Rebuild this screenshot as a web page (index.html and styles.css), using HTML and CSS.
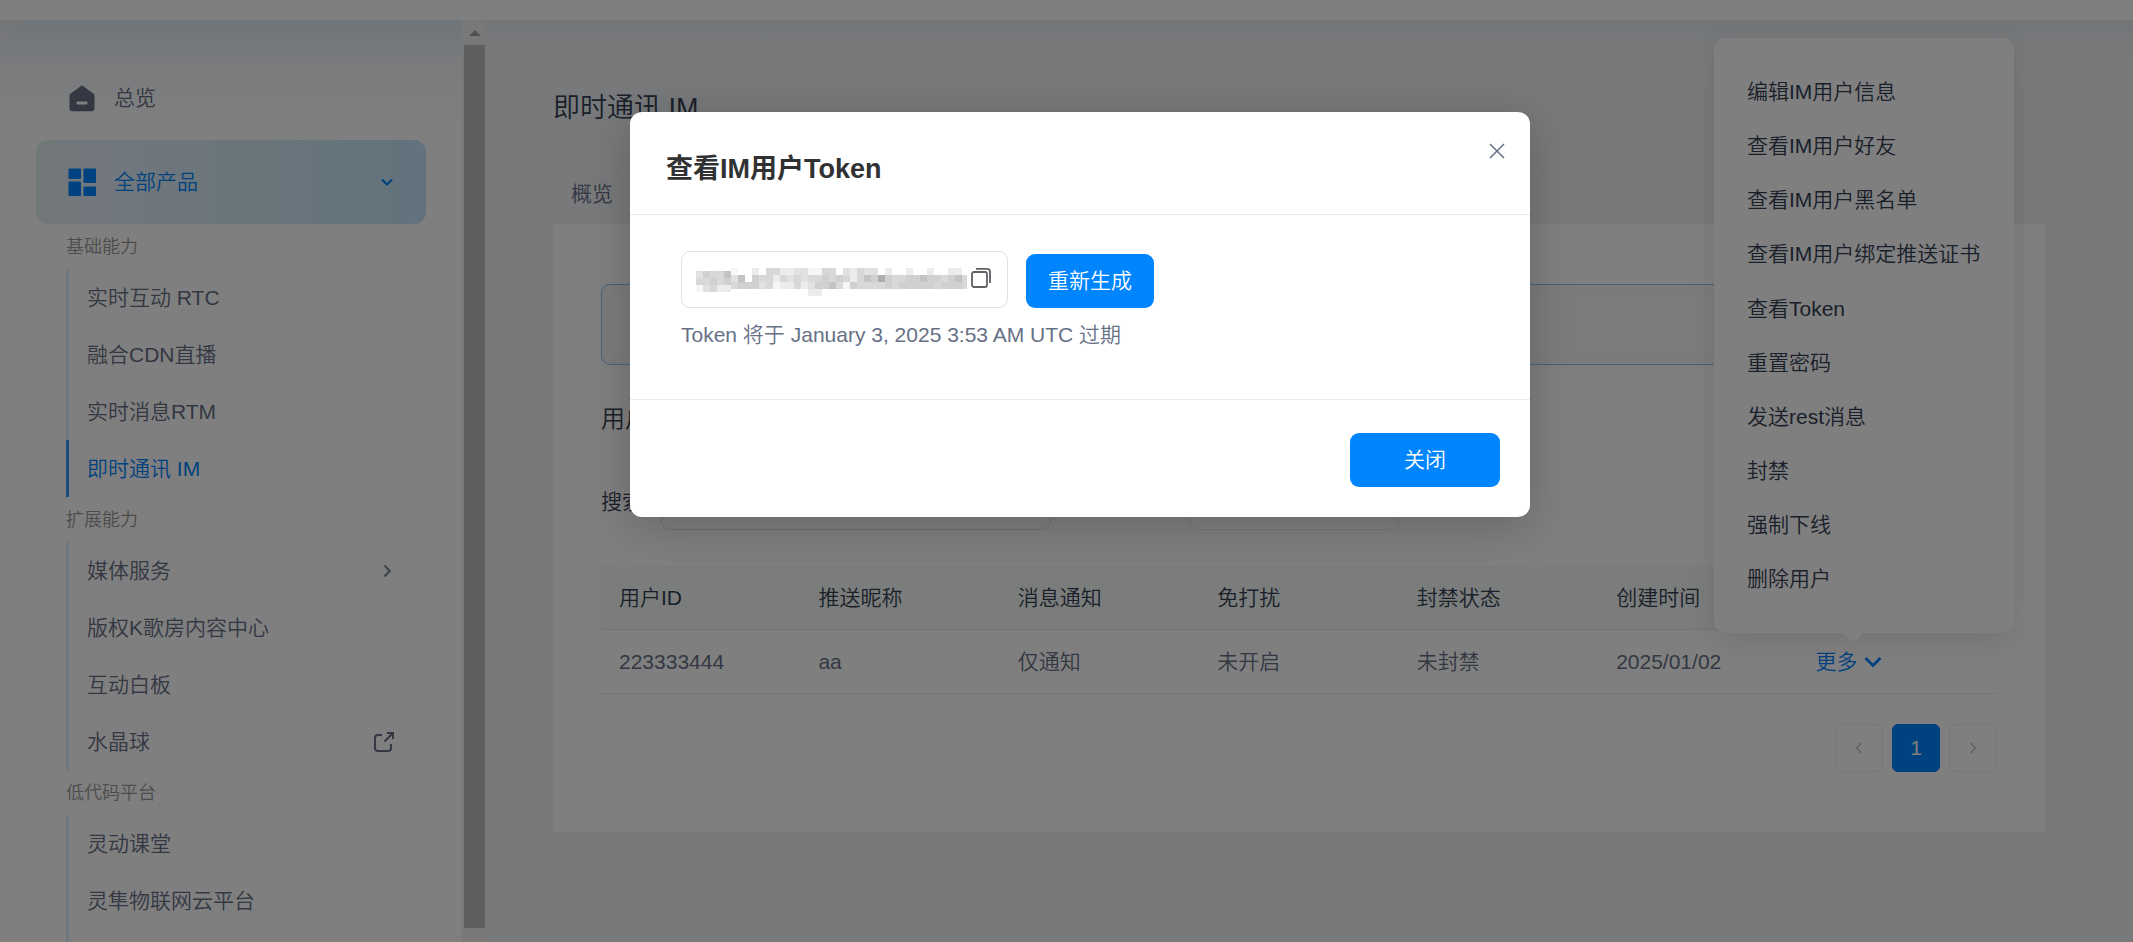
FILE: index.html
```html
<!DOCTYPE html>
<html lang="zh-CN">
<head>
<meta charset="utf-8">
<title>即时通讯 IM</title>
<link rel="stylesheet" href="styles.css">
</head>
<body>
<div class="app">
  <header class="topbar"></header>
  <div class="workspace">
    <aside class="sidebar">
      <nav class="nav">
        <a class="nav-main">
          <svg class="nav-icon" viewBox="0 0 28 28"><path d="M14 1.2 25.3 9.6Q26.500 10.500 26.500 12V24.300Q26.500 27.300 23.500 27.300H4.500Q1.500 27.300 1.500 24.300V12Q1.500 10.500 2.700 9.600Z" fill="#667085"/><rect x="8.500" y="17.500" width="11" height="3" rx="1.200" fill="#fff"/></svg>
          <span>总览</span>
        </a>
        <a class="nav-main nav-main-active">
          <svg class="nav-icon" viewBox="0 0 28 28"><g fill="#0085ff"><rect x=".5" y=".5" width="12.500" height="10.500" rx="1"/><rect x="15.500" y=".5" width="12.500" height="14.500" rx="1"/><rect x=".5" y="13.500" width="12.500" height="14.500" rx="1"/><rect x="15.500" y="18.500" width="12.500" height="9.500" rx="1"/></g></svg>
          <span>全部产品</span>
          <svg class="nav-arrow" viewBox="0 0 14 14"><path d="M2 4.500 7 9.500 12 4.500" fill="none" stroke="#0085ff" stroke-width="2.200"/></svg>
        </a>
        <h3 class="nav-title">基础能力</h3>
        <ul class="nav-list">
          <li>实时互动 RTC</li>
          <li>融合CDN直播</li>
          <li>实时消息RTM</li>
          <li class="current">即时通讯 IM</li>
        </ul>
        <h3 class="nav-title">扩展能力</h3>
        <ul class="nav-list">
          <li>媒体服务<svg class="nav-arrow sub" viewBox="0 0 14 14"><path d="M4.500 1.500 9.700 7 4.500 12.500" fill="none" stroke="#7e8798" stroke-width="2.200"/></svg></li>
          <li>版权K歌房内容中心</li>
          <li>互动白板</li>
          <li>水晶球<svg class="nav-ext" viewBox="0 0 22 22"><g fill="none" stroke="#667085" stroke-width="2"><path d="M9 4H5Q2 4 2 7V17Q2 20 5 20H15Q18 20 18 17V13"/><path d="M14 2H20V8M20 2 11.500 10.500"/></g></svg></li>
        </ul>
        <h3 class="nav-title">低代码平台</h3>
        <ul class="nav-list">
          <li>灵动课堂</li>
          <li>灵隼物联网云平台</li>
          <li></li>
        </ul>
      </nav>
      <div class="scrollbar">
        <svg class="scroll-up" viewBox="0 0 12 6"><path d="M0 6 6 0 12 6Z" fill="#a0a0a0"/></svg>
        <div class="scroll-thumb"></div>
      </div>
    </aside>
    <main class="main">
      <h1 class="page-title">即时通讯 IM</h1>
      <div class="tabs"><span>概览</span></div>
      <section class="card">
        <div class="notice"><div class="notice-body"></div></div>
        <h2 class="card-title">用户管理</h2>
        <div class="filters">
          <span class="filter-label">搜索</span>
          <div class="field search"></div>
          <div class="field select"></div>
        </div>
        <div class="table">
          <div class="row head"><span>用户ID</span><span>推送昵称</span><span>消息通知</span><span>免打扰</span><span>封禁状态</span><span>创建时间</span><span></span></div>
          <div class="row"><span>223333444</span><span>aa</span><span>仅通知</span><span>未开启</span><span>未封禁</span><span>2025/01/02</span><span class="more">更多<svg viewBox="0 0 18 12"><path d="M1.500 2 9 9.500 16.500 2" fill="none" stroke="#0085ff" stroke-width="2.800"/></svg></span></div>
        </div>
        <div class="pager">
          <span class="page"><svg viewBox="0 0 12 12"><path d="M8.500 1 3.500 6 8.500 11" fill="none" stroke="#c4c6ca" stroke-width="1.600"/></svg></span>
          <span class="page page-on">1</span>
          <span class="page"><svg viewBox="0 0 12 12"><path d="M3.500 1 8.500 6 3.500 11" fill="none" stroke="#c4c6ca" stroke-width="1.600"/></svg></span>
        </div>
      </section>
    </main>
  </div>
</div>

<div class="popover">
  <ul class="menu">
    <li>编辑IM用户信息</li>
    <li>查看IM用户好友</li>
    <li>查看IM用户黑名单</li>
    <li>查看IM用户绑定推送证书</li>
    <li>查看Token</li>
    <li>重置密码</li>
    <li>发送rest消息</li>
    <li>封禁</li>
    <li>强制下线</li>
    <li>删除用户</li>
  </ul>
  <svg class="popover-tip" viewBox="0 0 22 11"><path d="M0 0H22L13 9Q11 11 9 9Z" fill="#fff"/></svg>
</div>

<div class="overlay">
  <div class="modal">
    <div class="modal-head">
      <h2>查看IM用户Token</h2>
      <svg class="close" viewBox="0 0 16 16"><path d="M1 1 15 15M15 1 1 15" stroke="#667085" stroke-width="1.500"/></svg>
    </div>
    <div class="modal-body">
      <div class="token-row">
        <div class="token-box">
          <svg class="token-mask" id="mask" viewBox="0 0 272 28" shape-rendering="crispEdges"></svg>
          <svg class="copy" viewBox="0 0 20 20"><g fill="none" stroke="#606166" stroke-width="1.800"><rect x="1" y="4" width="15" height="15" rx="2"/><path d="M5 .9H16Q19 .9 19 4V15"/></g></svg>
        </div>
        <button class="btn btn-regen">重新生成</button>
      </div>
      <p class="token-tip">Token 将于 January 3, 2025 3:53 AM UTC 过期</p>
    </div>
    <div class="modal-foot"><button class="btn btn-close">关闭</button></div>
  </div>
</div>
<script src="mask.js"></script>
</body>
</html>
```

FILE: styles.css
```css
* { box-sizing: border-box; }
body {
  margin: 0;
  height: 942px;
  overflow: hidden;
  position: relative;
  font: 350 21px/30px "Liberation Sans", "Noto Sans CJK SC", sans-serif;
  color: #667085;
  background: #fff;
}
h1, h2, h3, p, ul { margin: 0; padding: 0; font-weight: 350; list-style: none; }
svg { display: block; flex: none; }

.app { height: 942px; display: flex; flex-direction: column; }
.topbar { height: 20px; background: #fff; }
.workspace {
  height: 922px;
  display: flex;
  background: linear-gradient(#e3eaf0, #eef1f5 20px, #f1f3f7 60px);
}

.sidebar {
  width: 486px;
  display: flex;
  overflow: hidden;
}
.nav {
  width: 462px;
  padding: 36px 36px 0;
  border-top-left-radius: 36px 54px;
  background: linear-gradient(#dce9f1, #f3f6fa 40px, #fff 110px);
}
.nav-main {
  height: 84px;
  padding: 0 32px;
  display: flex;
  align-items: center;
  border-radius: 12px;
}
.nav-main-active {
  color: #0085ff;
  background: linear-gradient(90deg, #e3eef0, #e4effb 15%, #d5ebf6 50%, #c4e6fa);
}
.nav-icon { width: 28px; height: 28px; margin-right: 18px; }
.nav-arrow { width: 14px; height: 14px; margin-left: auto; }
.nav-arrow.sub { margin-right: 32px; }
.nav-ext { width: 22px; height: 22px; margin: 0 31px 0 auto; }
.nav-title {
  height: 45px;
  padding-left: 30px;
  font-size: 18px;
  line-height: 47px;
  color: #999;
}
.nav-list { margin-left: 30px; border-left: 3px solid #e0eefc; }
.nav-list li {
  height: 57px;
  padding-left: 18px;
  display: flex;
  align-items: center;
}
.nav-list .current {
  margin-left: -3px;
  border-left: 3px solid #2f9bff;
  color: #0085ff;
}
.scrollbar {
  width: 24px;
  height: 922px;
  padding: 10px 1px 0 2px;
  background: #f0f0f1;
}
.scroll-up { width: 12px; height: 6px; margin: 0 auto 9px; }
.scroll-thumb { height: 883px; background: #bfbfbf; }

.main { width: 1559px; padding: 67px 0 0 67px; }
.page-title {
  font-size: 27px;
  line-height: 42px;
  color: #344054;
}
.tabs { height: 95px; padding: 50px 18px 0; }
.card {
  height: 608px;
  padding: 60px 48px;
  background: #fff;
}
.notice {
  height: 81px;
  padding: 12px;
  border: 1px solid #8fc3f5;
  border-radius: 9px;
  background: #f5f7fb;
}
.notice-body { height: 55px; border-radius: 6px; background: #f8f9fb; }
.card-title {
  margin-top: 36px;
  font-size: 24px;
  line-height: 36px;
  color: #344054;
}
.filters {
  height: 54px;
  margin-top: 39px;
  display: flex;
  align-items: center;
  color: #344054;
}
.filter-label { width: 60px; padding-bottom: 3px; }
.field { height: 54px; border: 1px solid #d9dce3; border-radius: 9px; }
.search { width: 390px; margin-right: 138px; border-width: 1.500px; }
.select { width: 210px; border-color: #ececee; }

.table { margin-top: 36px; }
.row {
  height: 64px;
  display: grid;
  grid-template-columns: repeat(7, 1fr);
  align-items: center;
  border-bottom: 1px solid #e4e7e9;
}
.row span { padding-left: 18px; }
.head { background: #f4faf6; color: #344054; }
.row .more { display: flex; align-items: center; gap: 6px; color: #0085ff; }
.more svg { width: 18px; height: 12px; }
.pager {
  margin-top: 30px;
  display: flex;
  justify-content: flex-end;
  gap: 9px;
}
.page {
  width: 48px;
  height: 48px;
  display: flex;
  align-items: center;
  justify-content: center;
  border: 1px solid #eeeef0;
  border-radius: 6px;
}
.page svg { width: 12px; height: 12px; }
.page-on { background: #0085ff; border-color: #0085ff; color: #fff; }

.popover {
  position: absolute;
  left: 1714px;
  top: 38px;
  width: 300px;
  height: 595px;
  padding: 27px 33px;
  border-radius: 12px;
  background: #fff;
  box-shadow: 0 9px 30px rgba(0, 0, 0, .1);
}
.menu li { height: 54.150px; line-height: 54px; color: #344054; white-space: nowrap; }
.popover-tip { position: absolute; left: 128px; bottom: -10px; width: 22px; height: 11px; }

.overlay {
  position: absolute;
  inset: 0;
  padding: 112px 603px 0 630px;
  background: rgba(0, 0, 0, .5);
}
.modal {
  height: 405px;
  display: flex;
  flex-direction: column;
  border-radius: 12px;
  background: #fff;
  box-shadow: 0 9px 48px rgba(0, 0, 0, .2);
}
.modal-head {
  height: 103px;
  padding: 0 25px 0 36px;
  display: flex;
  align-items: center;
  justify-content: space-between;
  border-bottom: 1px solid #e8eaec;
}
.modal-head h2 { padding-top: 12px; font-size: 27px; line-height: 40px; font-weight: 700; color: #303133; }
.close { width: 16px; height: 16px; margin-bottom: 25px; }
.modal-body { height: 185px; padding: 36px 51px 0; border-bottom: 1px solid #e8eaec; }
.token-row { display: flex; align-items: flex-end; gap: 18px; }
.token-box {
  width: 327px;
  height: 57px;
  padding: 0 16px 0 13px;
  display: flex;
  align-items: center;
  justify-content: space-between;
  border: 1.500px solid #dfe1ea;
  border-radius: 9px;
}
.token-mask { width: 272px; height: 28px; margin-top: 4px; }
.copy { width: 20px; height: 20px; margin-bottom: 3px; }
.btn {
  height: 54px;
  padding: 0;
  border: 0;
  border-radius: 9px;
  background: #0085ff;
  color: #fff;
  font: inherit;
}
.btn-regen { width: 128px; }
.btn-close { width: 150px; }
.token-tip { margin-top: 12px; }
.modal-foot { padding: 33px 30px 0 0; display: flex; justify-content: flex-end; }
```

FILE: mask.js
```javascript
// Mosaic that hides the token value: one digit per cell, 0 = clear, 8 = darkest.
const shades = ['', '#f6f6f6', '#ebeced', '#e0e1e2', '#d8d8da', '#cfd0d2', '#c2c3c5', '#b8b9bb', '#acadaf'];
const mask = document.getElementById('mask');

function paint(rows, left, top) {
  rows.forEach((row, r) => [...row].forEach((d, c) => {
    if (d === '0') return;
    const cell = document.createElementNS('http://www.w3.org/2000/svg', 'rect');
    cell.setAttribute('x', left + c * 7);
    cell.setAttribute('y', top + r * 7);
    cell.setAttribute('width', 7);
    cell.setAttribute('height', 7);
    cell.setAttribute('fill', shades[d]);
    mask.appendChild(cell);
  }));
}

paint(['35446', '44545', '13422'], 1, 3);
paint([
  '1002044223311440324330200200200220',
  '3605442434344545424658544556554564',
  '4555341224235564154444545555545554',
  '0000000000022000000000000000000000'
], 36, 0);
```
